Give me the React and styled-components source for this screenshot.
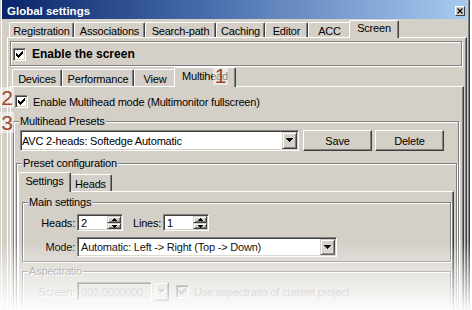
import React from 'react';
import styled, { createGlobalStyle, css } from 'styled-components';

const FACE = '#d4d0c8';
const HI = '#ffffff';
const SH = '#808080';
const DK = '#404040';
const RUST = '#a2472a';

const GlobalStyle = createGlobalStyle`
  html, body { margin: 0; padding: 0; background: #fff; }
  body { font-family: "Liberation Sans", Arial, sans-serif; font-size: 11px; letter-spacing: -0.2px; color: #000; }
  *, *::before, *::after { box-sizing: border-box; }
`;

const Root = styled.div`
  position: relative;
  width: 472px;
  height: 310px;
  overflow: hidden;
  background: #fff;
`;

const Window = styled.div`
  width: 470px;
  background: ${FACE};
  border-left: 1px solid ${FACE};
  border-right: 1px solid ${DK};
  padding: 0 2px 0 1px;
  box-shadow: inset 1px 0 ${HI}, inset -1px 0 ${SH};
  display: flex;
  flex-direction: column;
`;

const TitleBar = styled.div`
  flex: none;
  height: 19px;
  display: flex;
  align-items: flex-start;
  justify-content: space-between;
  padding: 0 2px 0 5px;
  background: linear-gradient(to right, #0a246a 0%, #3a5ea0 35%, #a6caf0 100%);
`;

const TitleText = styled.span`
  margin-top: 2px;
  color: #fff;
  font-weight: bold;
  font-size: 11.5px;
  letter-spacing: 0;
  line-height: 18px;
`;

const CloseButton = styled.div`
  margin-top: 6px;
  width: 10px;
  height: 10px;
  background: ${FACE};
  border: 1px solid;
  border-color: ${HI} ${DK} ${DK} ${HI};
  display: flex;
  align-items: center;
  justify-content: center;
`;

const Body = styled.div`
  padding: 1px 0 0 5px;
  display: flex;
  flex-direction: column;
`;

const TabStrip = styled.div`
  flex: none;
  display: flex;
  align-items: flex-end;
  height: ${p => p.$h}px;
  padding-left: 2px;
`;

const Tab = styled.div`
  flex: none;
  position: relative;
  width: ${p => p.$w}px;
  height: calc(100% - 2px);
  background: ${FACE};
  border: 1px solid ${HI};
  border-bottom: none;
  border-right-color: ${DK};
  border-radius: 2px 2px 0 0;
  box-shadow: inset -1px 0 ${SH};
  display: flex;
  align-items: center;
  justify-content: center;
  white-space: nowrap;
  padding-top: 1px;
  ${p => p.$active && css`
    width: ${p.$w + 4}px;
    height: calc(100% + 1px);
    margin: 0 -2px -1px;
    z-index: 1;
    padding-top: 0;
    padding-bottom: 3px;
  `}
`;

const TabPage = styled.div`
  background: ${FACE};
  border-top: 1px solid ${HI};
  border-left: 1px solid ${HI};
  border-right: 1px solid ${DK};
  box-shadow: inset -1px 0 ${SH};
  display: flex;
  flex-direction: column;
  align-items: stretch;
`;

const MainPage = styled(TabPage)`
  padding: 3px 2px 10px 2px;
`;

const SubPage = styled(TabPage)`
  padding: 8px 4px 10px 2px;
`;

const SettingsPage = styled(TabPage)`
  padding: 10px 2px 10px 3px;
`;

const EnableFrame = styled.div`
  height: 25px;
  margin-right: 2px;
  border: 1px solid ${SH};
  box-shadow: inset 1px 1px ${HI}, 1px 1px ${HI};
  display: flex;
  align-items: center;
  gap: 6px;
  padding: 1px 0 0 2px;
`;

const BoldLabel = styled.span`
  font-weight: bold;
  font-size: 12px;
  letter-spacing: 0;
`;

const SubStripWrap = styled.div`
  margin-top: 1px;
`;

const CheckRow = styled.div`
  display: flex;
  align-items: center;
  gap: 5px;
  height: 13px;
  margin-left: 2px;
  white-space: nowrap;
  color: ${p => (p.$disabled ? SH : '#000')};
`;

const GroupBox = styled.div`
  position: relative;
  border: 1px solid ${SH};
  box-shadow: inset 1px 1px ${HI}, 1px 1px ${HI};
  display: flex;
  flex-direction: column;
  align-items: stretch;
`;

const PresetsGroup = styled(GroupBox)`
  margin-top: 13px;
  padding: 8px 1px 10px 2px;
`;

const ConfigGroup = styled(GroupBox)`
  margin-top: 12px;
  padding: 8px 2px 10px 1px;
`;

const MainSettingsGroup = styled(GroupBox)`
  padding: 11px 0 4px 0;
  gap: 6px;
`;

const AspectGroup = styled(GroupBox)`
  margin-top: 9px;
  padding: 10px 0 20px 0;
`;

const Legend = styled.span`
  position: absolute;
  top: -7px;
  left: 5px;
  padding: 0 1px;
  line-height: 13px;
  background: ${FACE};
  white-space: nowrap;
  color: ${p => (p.$disabled ? SH : '#000')};
  text-shadow: ${p => (p.$disabled ? `1px 1px 0 ${HI}` : 'none')};
`;

const PresetRow = styled.div`
  display: flex;
  align-items: center;
  margin-left: 4px;
`;

const Sunken = css`
  border: 1px solid;
  border-color: ${SH} ${HI} ${HI} ${SH};
  box-shadow: inset 1px 1px ${DK}, inset -1px -1px ${FACE};
`;

const Raised = css`
  border: 1px solid;
  border-color: ${FACE} ${DK} ${DK} ${FACE};
  box-shadow: inset 1px 1px ${HI}, inset -1px -1px ${SH};
`;

const Combo = styled.div`
  flex: none;
  width: ${p => p.$w}px;
  height: ${p => p.$h}px;
  ${Sunken};
  background: ${p => (p.$disabled ? FACE : '#fff')};
  padding: 1px;
  display: flex;
  align-items: stretch;
`;

const FieldText = styled.span`
  flex: 1;
  display: flex;
  align-items: center;
  padding-left: ${p => p.$indent || 0}px;
  white-space: nowrap;
  overflow: hidden;
  color: ${p => (p.$disabled ? '#8c8c8c' : '#000')};
`;

const DropButton = styled.div`
  flex: none;
  width: 15px;
  ${Raised};
  background: ${FACE};
  display: flex;
  align-items: center;
  justify-content: center;
`;

const LooseDrop = styled(DropButton)`
  width: 15px;
  height: 19px;
  margin-left: 2px;
`;

const PushButton = styled.div`
  flex: none;
  width: ${p => p.$w}px;
  height: 21px;
  margin-left: ${p => p.$gap}px;
  border: 1px solid;
  border-color: ${HI} ${DK} ${DK} ${HI};
  box-shadow: inset -1px -1px ${SH};
  background: ${FACE};
  display: flex;
  align-items: center;
  justify-content: center;
`;

const FieldRow = styled.div`
  display: flex;
  align-items: center;
`;

const FieldLabel = styled.span`
  flex: none;
  width: 52px;
  margin-right: 2px;
  text-align: right;
  white-space: nowrap;
  color: ${p => (p.$disabled ? SH : '#000')};
  text-shadow: ${p => (p.$disabled ? `1px 1px 0 ${HI}` : 'none')};
`;

const InlineLabel = styled.span`
  flex: none;
  width: 28px;
  margin: 0 2px 0 10px;
  white-space: nowrap;
`;

const SpinEdit = styled.div`
  flex: none;
  width: 46px;
  height: 17px;
  ${Sunken};
  background: #fff;
  padding: 1px;
  display: flex;
  align-items: stretch;
`;

const SpinButtons = styled.div`
  flex: none;
  width: 14px;
  display: flex;
  flex-direction: column;
`;

const SpinBtn = styled.div`
  height: ${p => p.$h}px;
  ${Raised};
  background: ${FACE};
  display: flex;
  align-items: center;
  justify-content: center;
`;

const DisabledEdit = styled.div`
  flex: none;
  width: 75px;
  height: 19px;
  ${Sunken};
  background: ${FACE};
  padding: 1px 1px 1px 3px;
  display: flex;
  align-items: center;
  color: #8c8c8c;
`;

const AspectCheck = styled(CheckRow)`
  margin-left: 7px;
`;

const CheckBoxBox = styled.span`
  flex: none;
  width: 13px;
  height: 13px;
  ${Sunken};
  background: ${p => (p.$disabled ? FACE : '#fff')};
  display: flex;
  align-items: center;
  justify-content: center;
`;

const Fade = styled.div`
  position: absolute;
  left: 0;
  right: 0;
  top: 242px;
  bottom: 0;
  z-index: 5;
  pointer-events: none;
  background: linear-gradient(to bottom, rgba(255,255,255,0) 0%, rgba(255,255,255,0.45) 45%, rgba(255,255,255,0.95) 100%);
`;

const Badge = styled.div`
  position: absolute;
  z-index: 6;
  left: ${p => p.$x}px;
  top: ${p => p.$y}px;
  width: ${p => p.$w}px;
  height: ${p => p.$h}px;
  background: rgba(255, 255, 255, 0.5);
  color: ${RUST};
  font-family: "Liberation Sans", Arial, sans-serif;
  font-size: 21px;
  letter-spacing: 0;
  line-height: 1;
  display: flex;
  align-items: center;
  justify-content: center;
`;

const CheckMark = ({ color = '#000' }) => (
  <svg width="7" height="7" viewBox="0 0 7 7" shapeRendering="crispEdges">
    <g fill={color}>
      <rect x="6" y="0" width="1" height="1" />
      <rect x="5" y="1" width="2" height="1" />
      <rect x="0" y="2" width="1" height="1" />
      <rect x="4" y="2" width="3" height="1" />
      <rect x="0" y="3" width="2" height="1" />
      <rect x="3" y="3" width="3" height="1" />
      <rect x="0" y="4" width="5" height="1" />
      <rect x="1" y="5" width="3" height="1" />
      <rect x="2" y="6" width="1" height="1" />
    </g>
  </svg>
);

const ArrowDown = ({ color = '#000', shadow }) => (
  <svg width="8" height="5" viewBox="0 0 8 5" shapeRendering="crispEdges">
    {shadow && (
      <g fill={HI}>
        <rect x="1" y="1" width="7" height="1" />
        <rect x="2" y="2" width="5" height="1" />
        <rect x="3" y="3" width="3" height="1" />
        <rect x="4" y="4" width="1" height="1" />
      </g>
    )}
    <g fill={color}>
      <rect x="0" y="0" width="7" height="1" />
      <rect x="1" y="1" width="5" height="1" />
      <rect x="2" y="2" width="3" height="1" />
      <rect x="3" y="3" width="1" height="1" />
    </g>
  </svg>
);

const SmallArrow = ({ up }) => (
  <svg width="5" height="3" viewBox="0 0 5 3" shapeRendering="crispEdges">
    <g fill="#000">
      {up ? (
        <>
          <rect x="2" y="0" width="1" height="1" />
          <rect x="1" y="1" width="3" height="1" />
          <rect x="0" y="2" width="5" height="1" />
        </>
      ) : (
        <>
          <rect x="0" y="0" width="5" height="1" />
          <rect x="1" y="1" width="3" height="1" />
          <rect x="2" y="2" width="1" height="1" />
        </>
      )}
    </g>
  </svg>
);

const CheckBox = ({ disabled }) => (
  <CheckBoxBox $disabled={disabled}>
    <CheckMark color={disabled ? SH : '#000'} />
  </CheckBoxBox>
);

const Spin = ({ value }) => (
  <SpinEdit>
    <FieldText $indent={2}>{value}</FieldText>
    <SpinButtons>
      <SpinBtn $h={7}><SmallArrow up /></SpinBtn>
      <SpinBtn $h={6}><SmallArrow /></SpinBtn>
    </SpinButtons>
  </SpinEdit>
);

const mainTabs = [
  ['Registration', 65],
  ['Associations', 71],
  ['Search-path', 71],
  ['Caching', 49],
  ['Editor', 43],
  ['ACC', 43],
  ['Screen', 46, true],
];

const subTabs = [
  ['Devices', 50],
  ['Performance', 72],
  ['View', 42],
  ['Multihead', 58, true],
];

const settingsTabs = [
  ['Settings', 49, true],
  ['Heads', 43],
];

const Tabs = ({ items, h }) => (
  <TabStrip $h={h}>
    {items.map(([label, w, active]) => (
      <Tab key={label} $w={w} $active={active}>{label}</Tab>
    ))}
  </TabStrip>
);

export default function App() {
  return (
    <Root>
      <GlobalStyle />
      <Window>
        <TitleBar>
          <TitleText>Global settings</TitleText>
          <CloseButton>
            <svg width="6" height="6" viewBox="0 0 6 6">
              <path d="M0.5 0.5L5.5 5.5M5.5 0.5L0.5 5.5" stroke="#000" strokeWidth="1.2" />
            </svg>
          </CloseButton>
        </TitleBar>
        <Body>
          <Tabs items={mainTabs} h={17} />
          <MainPage>
            <EnableFrame>
              <CheckBox />
              <BoldLabel>Enable the screen</BoldLabel>
            </EnableFrame>
            <SubStripWrap>
              <Tabs items={subTabs} h={19} />
            </SubStripWrap>
            <SubPage>
              <CheckRow>
                <CheckBox />
                <span>Enable Multihead mode (Multimonitor fullscreen)</span>
              </CheckRow>
              <PresetsGroup>
                <Legend>Multihead Presets</Legend>
                <PresetRow>
                  <Combo $w={279} $h={21}>
                    <FieldText>AVC 2-heads: Softedge Automatic</FieldText>
                    <DropButton><ArrowDown /></DropButton>
                  </Combo>
                  <PushButton $w={69} $gap={4}>Save</PushButton>
                  <PushButton $w={69} $gap={3}>Delete</PushButton>
                </PresetRow>
                <ConfigGroup>
                  <Legend>Preset configuration</Legend>
                  <Tabs items={settingsTabs} h={19} />
                  <SettingsPage>
                    <MainSettingsGroup>
                      <Legend>Main settings</Legend>
                      <FieldRow>
                        <FieldLabel>Heads:</FieldLabel>
                        <Spin value="2" />
                        <InlineLabel>Lines:</InlineLabel>
                        <Spin value="1" />
                      </FieldRow>
                      <FieldRow>
                        <FieldLabel>Mode:</FieldLabel>
                        <Combo $w={260} $h={20}>
                          <FieldText $indent={2}>Automatic: Left -&gt; Right (Top -&gt; Down)</FieldText>
                          <DropButton><ArrowDown /></DropButton>
                        </Combo>
                      </FieldRow>
                    </MainSettingsGroup>
                    <AspectGroup>
                      <Legend $disabled>Aspectratio</Legend>
                      <FieldRow>
                        <FieldLabel $disabled>Screen:</FieldLabel>
                        <DisabledEdit>002.0000000</DisabledEdit>
                        <LooseDrop><ArrowDown color={SH} shadow /></LooseDrop>
                        <AspectCheck $disabled>
                          <CheckBox disabled />
                          <span>Use aspectratio of current project</span>
                        </AspectCheck>
                      </FieldRow>
                    </AspectGroup>
                  </SettingsPage>
                </ConfigGroup>
              </PresetsGroup>
            </SubPage>
          </MainPage>
        </Body>
      </Window>
      <Fade />
      <Badge $x={213} $y={66} $w={15} $h={19}>1</Badge>
      <Badge $x={0} $y={87} $w={14} $h={21}>2</Badge>
      <Badge $x={0} $y={112} $w={14} $h={21}>3</Badge>
    </Root>
  );
}
